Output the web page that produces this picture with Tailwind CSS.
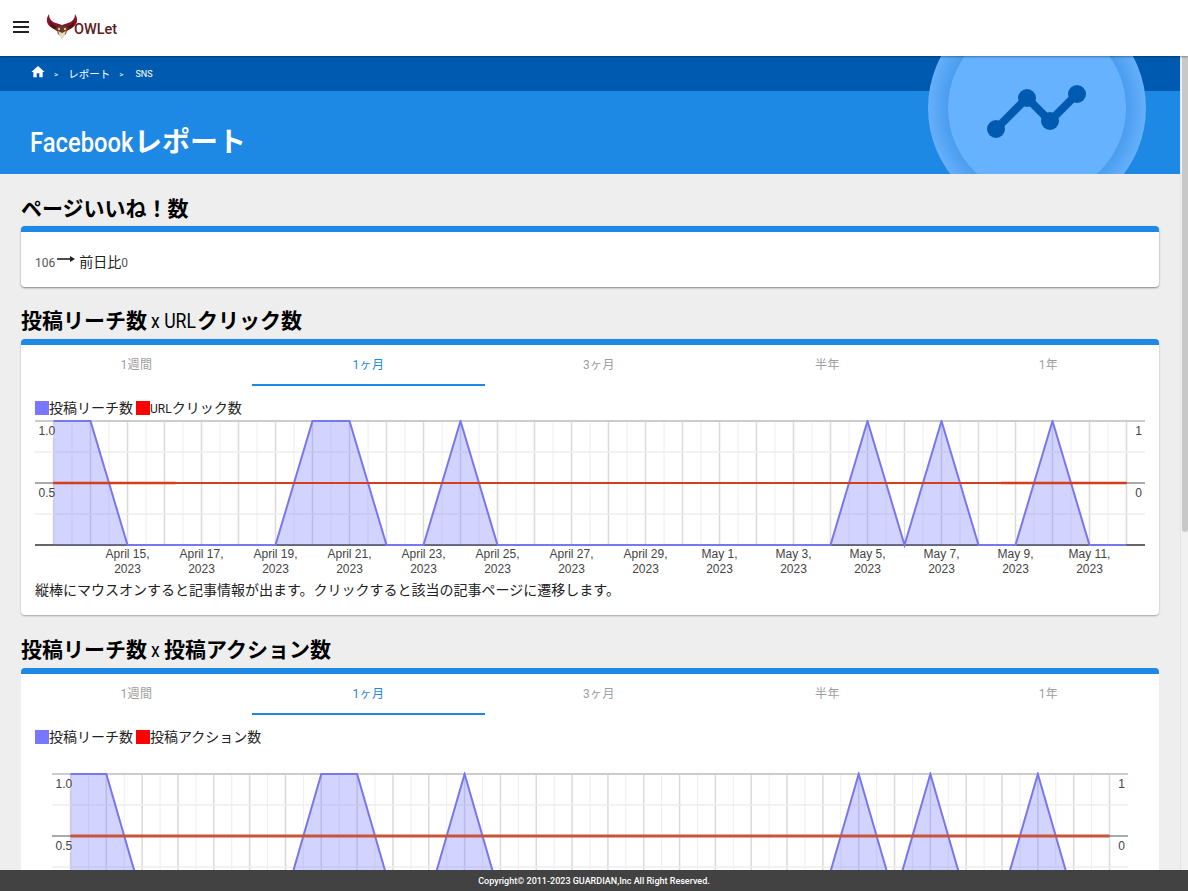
<!DOCTYPE html>
<html lang="ja">
<head>
  <meta charset="UTF-8" />
  <title>Facebookレポート</title>
  <script src="https://cdn.jsdelivr.net/npm/@tailwindcss/browser@4"></script>
</head>
<body class="font-['Roboto','Noto_Sans_CJK_JP',sans-serif] text-[#212121]">
  <div class="relative w-[1188px] h-[891px] overflow-hidden bg-[#eeeeee]">

    <!-- header -->
    <header class="relative z-10 h-[56px] bg-white flex items-center shadow-[0_1px_2px_rgba(0,0,0,0.35)]">
      <svg class="ml-[9px] mb-[2px]" width="24" height="24" viewBox="0 0 24 24" fill="#212121"><path d="M4 18h16v-2H4v2zm0-5h16v-2H4v2zm0-7v2h16V6H4z"/></svg>
      <div class="ml-[12px] mb-[4px] flex items-end h-[28px]">
        <svg width="34" height="27" viewBox="0 0 34 27">
          <path d="M4 1 C0 7 2 12 7 15 L12 18 L17 15 L22 18 L27 15 C32 12 34 7 30 1 C30 6 27 9 23 10 L17 12 L11 10 C7 9 4 6 4 1Z" fill="#8c1228"/>
          <path d="M5 8 C7 12 10 13 13 14 L9 16 C6 14 5 11 5 8Z M29 8 C27 12 24 13 21 14 L25 16 C28 14 29 11 29 8Z" fill="#3a1a1a"/>
          <path d="M11 14 L17 12 L23 14 L21 21 L17 24 L13 21Z" fill="#5e3a30"/>
          <path d="M13 18 L17 20 L21 18 L19 24 L17 26 L15 24Z" fill="#e8d9b8"/>
          <circle cx="14" cy="16" r="1.2" fill="#f0c040"/><circle cx="20" cy="16" r="1.2" fill="#f0c040"/>
        </svg>
        <span class="ml-[-5px] text-[14.5px] leading-[20px] font-medium text-[#5c1c22]">OWLet</span>
      </div>
    </header>

    <!-- breadcrumb + title -->
    <div class="relative w-[1180px] overflow-hidden bg-[#1e88e5]">
      <nav class="h-[35px] bg-[#005bb0] flex items-center pl-[30px] text-white">
        <svg class="mb-[3px]" width="16" height="16" viewBox="0 0 24 24" fill="#fff"><path d="M10 20v-6h4v6h5v-8h3L12 3 2 12h3v8z"/></svg>
        <span class="ml-[8px] mt-[2px] text-[8px]">&gt;</span>
        <span class="ml-[10px] mt-[2px] text-[10.5px]">レポート</span>
        <span class="ml-[9px] mt-[2px] text-[8px]">&gt;</span>
        <span class="ml-[12px] mt-[2px] text-[9px]">SNS</span>
      </nav>
      <h1 class="h-[83px] pl-[30px] pt-[32px] text-[28px] leading-[40px] font-bold text-white whitespace-nowrap"><span class="inline-block w-[104px] origin-left scale-x-[0.85] font-medium">Facebook</span>レポート</h1>
      <div class="absolute left-[928px] top-[-57px] w-[218px] h-[218px] rounded-full bg-[radial-gradient(circle_closest-side,#4a9df0_82%,#66b0fa_100%)]"></div>
      <div class="absolute left-[948px] top-[-37px] w-[178px] h-[178px] rounded-full bg-[#66b2ff]"></div>
      <svg class="absolute left-[980px] top-[20px]" width="115" height="85" viewBox="980 76 115 85" fill="#005bb0">
        <path d="M996 129 L1027 98 L1050 121 L1077 94" fill="none" stroke="#005bb0" stroke-width="8"/>
        <circle cx="996" cy="129" r="9"/><circle cx="1027" cy="98" r="9"/><circle cx="1050" cy="121" r="9"/><circle cx="1077" cy="94" r="9"/>
      </svg>
    </div>

    <!-- page content -->
    <main class="w-[1180px] px-[21px]">
      <h2 class="pt-[21px] h-[52px] text-[21px] leading-[28px] font-bold text-black">ページいいね！数</h2>
      <section class="h-[61px] bg-white rounded-[4px] border-t-[6px] border-[#1e88e5] shadow-[0_1px_2px_rgba(0,0,0,0.45)] px-[14px] pt-[18px] flex items-center">
        <div class="flex items-center mb-[12px] text-[14px]">
          <span class="text-[12px] text-[#555]">106</span>
          <svg class="ml-[2px] mb-[8px]" width="18" height="10" viewBox="0 0 18 10"><path d="M0 5h15" stroke="#212121" stroke-width="1.6"/><path d="M13 2l5 3-5 3z" fill="#212121"/></svg>
          <span class="ml-[4px]">前日比</span><span class="text-[12px] text-[#555]">0</span>
        </div>
      </section>

      <h2 class="pt-[20px] h-[52px] text-[21px] leading-[28px] font-bold text-black whitespace-nowrap">投稿リーチ数<span class="inline-block ml-[4px] w-[46px] origin-left scale-x-[0.84] font-normal">x URL</span>クリック数</h2>
      <section class="h-[276px] bg-white rounded-[4px] border-t-[6px] border-[#1e88e5] shadow-[0_1px_2px_rgba(0,0,0,0.3)]">
        <div class="flex h-[41px] text-[12px] text-[#9e9e9e] tracking-[0.5px]">
          <div class="w-[231px] flex justify-center pt-[11px]">1週間</div>
          <div class="w-[233px] flex justify-center pt-[11px] text-[#1e88e5] border-b-2 border-[#1e88e5]">1ヶ月</div>
          <div class="w-[228px] flex justify-center pt-[11px]">3ヶ月</div>
          <div class="w-[229px] flex justify-center pt-[11px]">半年</div>
          <div class="flex-1 flex justify-center pt-[11px] pr-[4px]">1年</div>
        </div>
        <div class="px-[14px] pt-[10px] h-[34px] flex items-center text-[14px] leading-[20px]">
          <span class="w-[14px] h-[14px] bg-[#7777ff]"></span><span>投稿リーチ数</span>
          <span class="ml-[3px] w-[14px] h-[14px] bg-[#ff0000]"></span><span><span class="text-[12px]">URL</span>クリック数</span>
        </div>
        <div class="ml-[14px] h-[160px]"><svg id="chart1" width="1110" height="160"></svg></div>
        <p class="px-[14px] text-[14px] leading-[20px]">縦棒にマウスオンすると記事情報が出ます。クリックすると該当の記事ページに遷移します。</p>
      </section>

      <h2 class="pt-[21px] h-[53px] text-[21px] leading-[28px] font-bold text-black whitespace-nowrap">投稿リーチ数<span class="inline-block ml-[4px] w-[13px] origin-left scale-x-[0.84] font-normal">x</span>投稿アクション数</h2>
      <section class="bg-white rounded-[4px] border-t-[6px] border-[#1e88e5] h-[300px]">
        <div class="flex h-[41px] text-[12px] text-[#9e9e9e] tracking-[0.5px]">
          <div class="w-[231px] flex justify-center pt-[11px]">1週間</div>
          <div class="w-[233px] flex justify-center pt-[11px] text-[#1e88e5] border-b-2 border-[#1e88e5]">1ヶ月</div>
          <div class="w-[228px] flex justify-center pt-[11px]">3ヶ月</div>
          <div class="w-[229px] flex justify-center pt-[11px]">半年</div>
          <div class="flex-1 flex justify-center pt-[11px] pr-[4px]">1年</div>
        </div>
        <div class="px-[14px] pt-[10px] h-[34px] flex items-center text-[14px] leading-[20px]">
          <span class="w-[14px] h-[14px] bg-[#7777ff]"></span><span>投稿リーチ数</span>
          <span class="ml-[3px] w-[14px] h-[14px] bg-[#ff0000]"></span><span>投稿アクション数</span>
        </div>
        <div class="ml-[31px] mt-[23px] h-[140px]"><svg id="chart2" width="1076" height="140"></svg></div>
      </section>
    </main>

    <!-- scrollbar -->
    <div class="absolute right-0 top-[56px] bottom-0 w-[8px] bg-[#f1f1f1] border-l border-[#e4e4e4]">
      <div class="ml-[1px] w-[6px] h-[476px] bg-[#c8c8c8] rounded-b-[3px]"></div>
    </div>

    <!-- footer -->
    <footer class="absolute left-0 right-0 bottom-0 h-[21px] pt-[2px] bg-[#424242] flex items-center justify-center text-[9px] font-medium text-white">Copyright© 2011-2023 GUARDIAN,Inc All Right Reserved.</footer>
  </div>

  <script>
    // one value per day, Apr 13 - May 12
    const reach = [1,1,0,0,0,0,0,1,1,0,0,1,0,0,0,0,0,0,0,0,0,0,1,0,1,0,0,1,0,0];
    const dates = ['April 15,','April 17,','April 19,','April 21,','April 23,','April 25,','April 27,','April 29,','May 1,','May 3,','May 5,','May 7,','May 9,','May 11,'];

    function drawChart(id, o) {
      const step = (o.right - o.left) / 29;
      const y = v => o.top + (1 - v) * o.h;
      const x = i => o.left + i * step;
      const w = o.width;
      let s = '';
      // grid
      for (let i = 0; i < 59; i++) {
        const gx = o.left + i * step / 2;
        s += `<line x1="${gx}" x2="${gx}" y1="${o.top}" y2="${o.top + o.h}" stroke="${i % 2 ? '#eeeeee' : '#dadada'}" stroke-width="${i % 2 ? 1 : 1.5}"/>`;
      }
      [0, 0.25, 0.75].forEach(t => {
        s += `<line x1="0" x2="${w}" y1="${o.top + t * o.h}" y2="${o.top + t * o.h}" stroke="${t ? '#eeeeee' : '#cccccc'}" stroke-width="${t ? 1.5 : 2}"/>`;
      });
      s += `<line x1="0" x2="${w}" y1="${o.top + o.h / 2}" y2="${o.top + o.h / 2}" stroke="#555555"/>`;
      s += `<line x1="0" x2="${w}" y1="${o.top + o.h}" y2="${o.top + o.h}" stroke="#333333" stroke-width="1.5"/>`;
      // reach area
      const pts = reach.map((v, i) => `${x(i)},${y(v)}`).join(' ');
      s += `<polygon points="${x(0)},${y(0)} ${pts} ${x(29)},${y(0)}" fill="#7777ff" fill-opacity="0.32"/>`;
      s += `<polyline points="${pts}" fill="none" stroke="#7777ee" stroke-width="2"/>`;
      // clicks
      s += `<line x1="${x(0)}" x2="${x(29)}" y1="${y(0.5)}" y2="${y(0.5)}" stroke="${o.red}" stroke-width="${o.redW}"/>`;
      if (o.dates) {
        s += `<line x1="${x(0)}" x2="${x(3.3)}" y1="${y(0.5)}" y2="${y(0.5)}" stroke="${o.red}" stroke-width="2.5"/>`;
        s += `<line x1="${x(25.6)}" x2="${x(29)}" y1="${y(0.5)}" y2="${y(0.5)}" stroke="${o.red}" stroke-width="2.5"/>`;
      }
      // axis labels
      const lab = (tx, ty, t, anchor) => `<text x="${tx}" y="${ty}" text-anchor="${anchor}" font-family="Liberation Sans" font-size="12" fill="#444444">${t}</text>`;
      s += `<rect x="${o.left - 16}" y="${y(1) + 4}" width="16" height="13" fill="#fff" fill-opacity="0.8"/>` + lab(o.left - 15, y(1) + 14, '1.0', 'start');
      s += `<rect x="${o.left - 16}" y="${y(0.5) + 4}" width="16" height="13" fill="#fff" fill-opacity="0.8"/>` + lab(o.left - 15, y(0.5) + 14, '0.5', 'start');
      s += lab(w - 3, y(1) + 14, '1', 'end') + lab(w - 3, y(0.5) + 14, '0', 'end');
      if (o.dates) {
        dates.forEach((d, i) => {
          s += lab(x(2 + i * 2), y(0) + 13, d, 'middle') + lab(x(2 + i * 2), y(0) + 28, '2023', 'middle');
        });
      }
      document.getElementById(id).innerHTML = s;
    }

    drawChart('chart1', { width: 1110, left: 18.5, right: 1091.5, top: 1, h: 124, dates: true, red: '#d23f1e', redW: 2 });
    drawChart('chart2', { width: 1076, left: 18.5, right: 1057.5, top: 2, h: 124, dates: false, red: '#c8553a', redW: 3 });
  </script>
</body>
</html>
